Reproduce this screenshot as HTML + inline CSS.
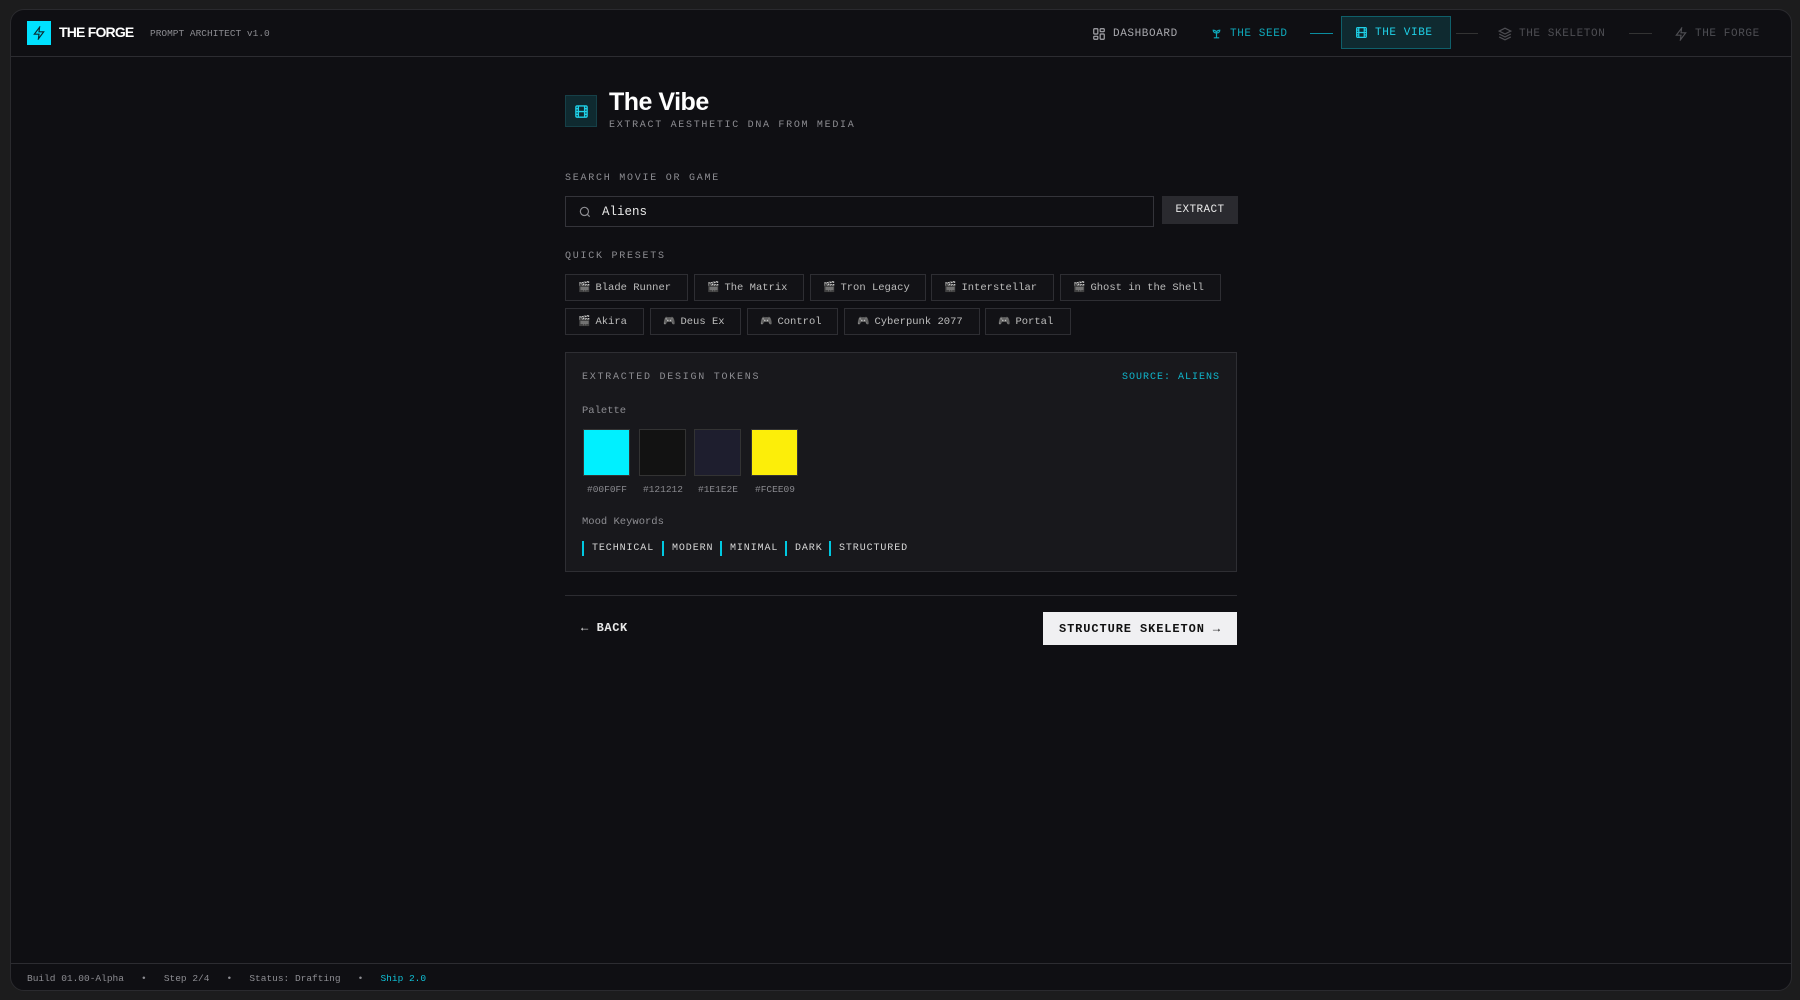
<!DOCTYPE html>
<html><head><meta charset="utf-8"><style>
*{box-sizing:border-box;margin:0;padding:0}
body{width:1800px;height:1000px;background:#1c1c1d;position:relative;overflow:hidden;font-family:"Liberation Mono",monospace;color:#e6e6e6}
.frame{position:absolute;left:10px;top:9px;width:1782px;height:982px;background:#0f0f13;border:1px solid #2a2a2e;border-radius:14px;overflow:hidden}
.a{position:absolute;white-space:nowrap}
.hdr{position:absolute;left:0;top:0;width:100%;height:47px;border-bottom:1px solid #2c2c31}
.sans{font-family:"Liberation Sans",sans-serif}
.nav{font-size:11px;letter-spacing:0.6px;display:flex;align-items:center;gap:7px}
.chip{position:absolute;height:27px;border:1px solid #2e2e33;background:#121216;font-size:10.5px;color:#bdbdbd;display:flex;align-items:center;padding-left:12px;gap:5px;white-space:nowrap}
.chip i{font-style:normal;filter:grayscale(1);font-size:10px}
.lbl{font-size:10px;letter-spacing:1.75px;color:#8d8d92}
.sw{position:absolute;top:419px;width:47px;height:47px;border:1px solid #333}
.hex{position:absolute;top:474px;font-size:9.5px;color:#8a8a8f;width:56px;text-align:center}
.tag{position:absolute;top:531px;font-size:10px;letter-spacing:0.9px;color:#d8d8d8;border-left:2px solid #00c8e0;padding-left:8px;height:15px;line-height:15px}
</style></head><body>
<div class="frame">
<div class="hdr"></div>
<div class="a" style="left:16px;top:11px;width:24px;height:24px;background:#00e1ff;display:flex;align-items:center;justify-content:center">
<svg width="14" height="14" viewBox="0 0 24 24" fill="none" stroke="#0a2a30" stroke-width="2"><path d="M13 2 4 14h8l-1 8 9-12h-8z"/></svg></div>
<div class="a sans" style="left:48px;top:14px;font-size:14px;font-weight:bold;letter-spacing:-0.8px;color:#fff">THE FORGE</div>
<div class="a" style="left:139px;top:18px;font-size:9.5px;color:#8b8b90">PROMPT ARCHITECT v1.0</div>

<div class="a nav" style="left:1081px;top:15px;color:#a8a8ad;height:17px">
<svg width="14" height="14" viewBox="0 0 24 24" fill="none" stroke="#a8a8ad" stroke-width="2"><rect x="3" y="3" width="7" height="9" rx="1"/><rect x="14" y="3" width="7" height="5" rx="1"/><rect x="14" y="12" width="7" height="9" rx="1"/><rect x="3" y="16" width="7" height="5" rx="1"/></svg>DASHBOARD</div>
<div class="a nav" style="left:1199px;top:15px;color:#0fa9bb;height:17px">
<svg width="13" height="13" viewBox="0 0 24 24" fill="none" stroke="#0fa9bb" stroke-width="2.2"><path d="M7 20h10M12 20v-9c0-3-2-5-6-5 0 3 2 5 6 5M12 11c0-3 2-5 6-5 0 3-2 5-6 5"/></svg> THE SEED</div>
<div class="a" style="left:1299px;top:23px;width:23px;height:1px;background:#0a8da0"></div>
<div class="a" style="left:1330px;top:6px;width:110px;height:33px;background:#0f2a30;border:1px solid #0f5f6a"></div>
<div class="a nav" style="left:1344px;top:14px;color:#1fd1e8;height:17px">
<svg width="13" height="13" viewBox="0 0 24 24" fill="none" stroke="#1fd1e8" stroke-width="2.2"><rect x="3" y="3" width="18" height="18" rx="2"/><path d="M7 3v18M17 3v18M3 12h18M3 7.5h4M3 16.5h4M17 7.5h4M17 16.5h4"/></svg> THE VIBE</div>
<div class="a" style="left:1445px;top:23px;width:22px;height:1px;background:#333"></div>
<div class="a nav" style="left:1487px;top:15px;color:#4e4e53;height:17px">
<svg width="14" height="14" viewBox="0 0 24 24" fill="none" stroke="#4e4e53" stroke-width="2"><path d="M12 2 2 7l10 5 10-5zM2 12l10 5 10-5M2 17l10 5 10-5"/></svg>THE SKELETON</div>
<div class="a" style="left:1618px;top:23px;width:23px;height:1px;background:#333"></div>
<div class="a nav" style="left:1663px;top:15px;color:#4e4e53;height:17px">
<svg width="14" height="14" viewBox="0 0 24 24" fill="none" stroke="#4e4e53" stroke-width="2"><path d="M13 2 4 14h8l-1 8 9-12h-8z"/></svg>THE FORGE</div>

<div class="a" style="left:554px;top:85px;width:32px;height:32px;background:#0f2a30;border:1px solid #164048;display:flex;align-items:center;justify-content:center">
<svg width="15" height="15" viewBox="0 0 24 24" fill="none" stroke="#1fd1e8" stroke-width="2.2"><rect x="3" y="3" width="18" height="18" rx="2"/><path d="M7 3v18M17 3v18M3 12h18M3 7.5h4M3 16.5h4M17 7.5h4M17 16.5h4"/></svg></div>
<div class="a sans" style="left:598px;top:78px;font-size:25px;font-weight:bold;color:#fff;letter-spacing:-0.5px">The Vibe</div>
<div class="a" style="left:598px;top:110px;font-size:10px;letter-spacing:1.7px;color:#8d8d92">EXTRACT AESTHETIC DNA FROM MEDIA</div>

<div class="a lbl" style="left:554px;top:163px">SEARCH MOVIE OR GAME</div>
<div class="a" style="left:554px;top:186px;width:589px;height:31px;border:1px solid #34343a;background:#0f0f13"></div>
<svg class="a" style="left:567px;top:195px" width="14" height="14" viewBox="0 0 24 24" fill="none" stroke="#8d8d92" stroke-width="2"><circle cx="11" cy="11" r="7"/><path d="m20 20-4-4"/></svg>
<div class="a" style="left:591px;top:195px;font-size:12.5px;color:#e8e8e8">Aliens</div>
<div class="a" style="left:1151px;top:186px;width:76px;height:28px;background:#2a2a2f;font-size:11px;letter-spacing:0.4px;color:#e8e8e8;display:flex;align-items:center;justify-content:center">EXTRACT</div>

<div class="a lbl" style="left:554px;top:241px">QUICK PRESETS</div>
<div class="chip" style="left:554px;top:264px;width:123px"><i>🎬</i> Blade Runner</div>
<div class="chip" style="left:683px;top:264px;width:110px"><i>🎬</i> The Matrix</div>
<div class="chip" style="left:799px;top:264px;width:116px"><i>🎬</i> Tron Legacy</div>
<div class="chip" style="left:920px;top:264px;width:123px"><i>🎬</i> Interstellar</div>
<div class="chip" style="left:1049px;top:264px;width:161px"><i>🎬</i> Ghost in the Shell</div>
<div class="chip" style="left:554px;top:298px;width:79px"><i>🎬</i> Akira</div>
<div class="chip" style="left:639px;top:298px;width:91px"><i>🎮</i> Deus Ex</div>
<div class="chip" style="left:736px;top:298px;width:91px"><i>🎮</i> Control</div>
<div class="chip" style="left:833px;top:298px;width:136px"><i>🎮</i> Cyberpunk 2077</div>
<div class="chip" style="left:974px;top:298px;width:86px"><i>🎮</i> Portal</div>

<div class="a" style="left:554px;top:342px;width:672px;height:220px;background:#18181c;border:1px solid #2e2e33"></div>
<div class="a lbl" style="left:571px;top:362px">EXTRACTED DESIGN TOKENS</div>
<div class="a" style="left:1111px;top:362px;font-size:10px;letter-spacing:1px;color:#10b6cc">SOURCE: ALIENS</div>
<div class="a" style="left:571px;top:395px;font-size:10.5px;color:#8d8d92">Palette</div>
<div class="sw" style="left:572px;background:#00f0ff"></div>
<div class="sw" style="left:628px;background:#121212"></div>
<div class="sw" style="left:683px;background:#1e1e2e"></div>
<div class="sw" style="left:740px;background:#fcee09"></div>
<div class="hex" style="left:568px">#00F0FF</div>
<div class="hex" style="left:624px">#121212</div>
<div class="hex" style="left:679px">#1E1E2E</div>
<div class="hex" style="left:736px">#FCEE09</div>
<div class="a" style="left:571px;top:506px;font-size:10.5px;color:#8d8d92">Mood Keywords</div>
<div class="tag" style="left:571px">TECHNICAL</div>
<div class="tag" style="left:651px">MODERN</div>
<div class="tag" style="left:709px">MINIMAL</div>
<div class="tag" style="left:774px">DARK</div>
<div class="tag" style="left:818px">STRUCTURED</div>

<div class="a" style="left:554px;top:585px;width:672px;height:1px;background:#2c2c31"></div>
<div class="a" style="left:570px;top:611px;font-size:12px;font-weight:bold;color:#e8e8e8;letter-spacing:0.6px">← BACK</div>
<div class="a" style="left:1032px;top:602px;width:194px;height:33px;background:#f0f0f2;color:#111;font-size:12px;font-weight:bold;letter-spacing:0.9px;display:flex;align-items:center;justify-content:center">STRUCTURE SKELETON →</div>

<div class="a" style="left:0;top:953px;width:100%;height:1px;background:#2c2c31"></div>
<div class="a" style="left:16px;top:963px;font-size:9.5px;color:#8d8d92">Build 01.00-Alpha&nbsp;&nbsp;&nbsp;•&nbsp;&nbsp;&nbsp;Step 2/4&nbsp;&nbsp;&nbsp;•&nbsp;&nbsp;&nbsp;Status: Drafting&nbsp;&nbsp;&nbsp;•&nbsp;&nbsp;&nbsp;<span style="color:#10c0d6">Ship 2.0</span></div>
</div>
</body></html>
